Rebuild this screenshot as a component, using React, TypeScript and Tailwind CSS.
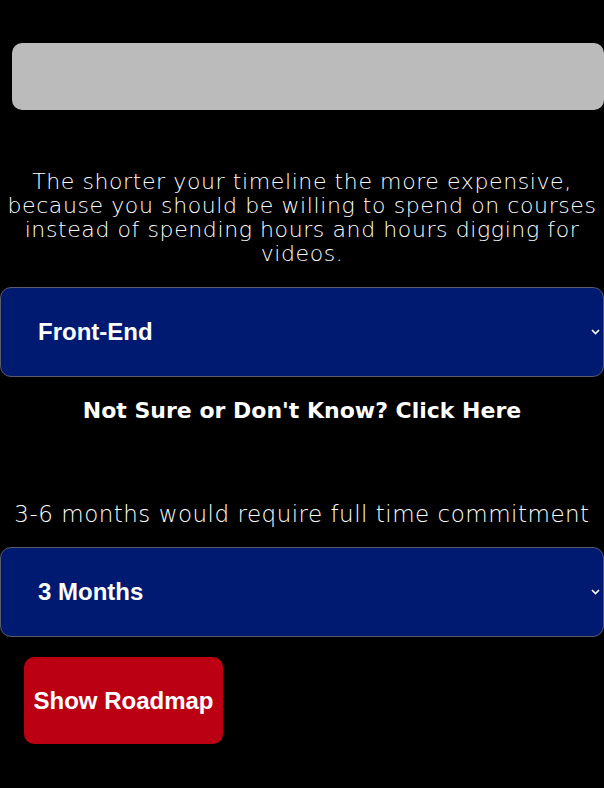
import { useState } from 'react';

const Chevron = () => (
    <svg width="9" height="6" viewBox="0 0 9 6" className="shrink-0">
        <path d="M1 1l3.5 3.5L8 1" fill="none" stroke="white" strokeWidth="1.6" />
    </svg>
);

const FakeSelect = ({ value }: { value: string }) => (
    <div className="flex items-center justify-between w-full h-[90px] bg-[#001a72] border border-[#5a5a6a] rounded-[11px] pl-[37px] pr-[3px]">
        <span className="text-white text-[24px] font-bold font-['Liberation_Sans',Arial,sans-serif]">{value}</span>
        <Chevron />
    </div>
);

export default function App() {
    const [path] = useState('Front-End');
    const [time] = useState('3 Months');

    return (
        <div className="min-h-[788px] w-[604px] bg-black overflow-hidden font-['DejaVu_Sans',sans-serif] text-white">
            {/* top input */}
            <div className="pt-[43px] pl-[12px]">
                <div className="h-[67px] w-[592px] bg-[#bbbbbb] rounded-[10px]"></div>
            </div>

            <p className="mt-[60px] text-center text-[22px] leading-[24px] font-extralight tracking-[0.6px]">
                The shorter your timeline the more expensive, because you should be willing to spend on courses instead of spending hours and hours digging for videos.
            </p>

            <div className="mt-[21px]">
                <FakeSelect value={path} />
            </div>

            <p className="mt-[21px] text-center text-[22px] font-bold leading-[26px]">
                Not Sure or Don't Know? Click Here
            </p>

            <p className="mt-[76px] text-center text-[23px] font-extralight leading-[28px] tracking-[0.5px]">
                3-6 months would require full time commitment
            </p>

            <div className="mt-[19px]">
                <FakeSelect value={time} />
            </div>

            <div className="pl-[24px] mt-[20px]">
                <button className="w-[199px] h-[87px] bg-[#bb0014] rounded-[10px] text-white text-[24px] font-bold font-['Liberation_Sans',Arial,sans-serif]">
                    Show Roadmap
                </button>
            </div>
        </div>
    );
}
